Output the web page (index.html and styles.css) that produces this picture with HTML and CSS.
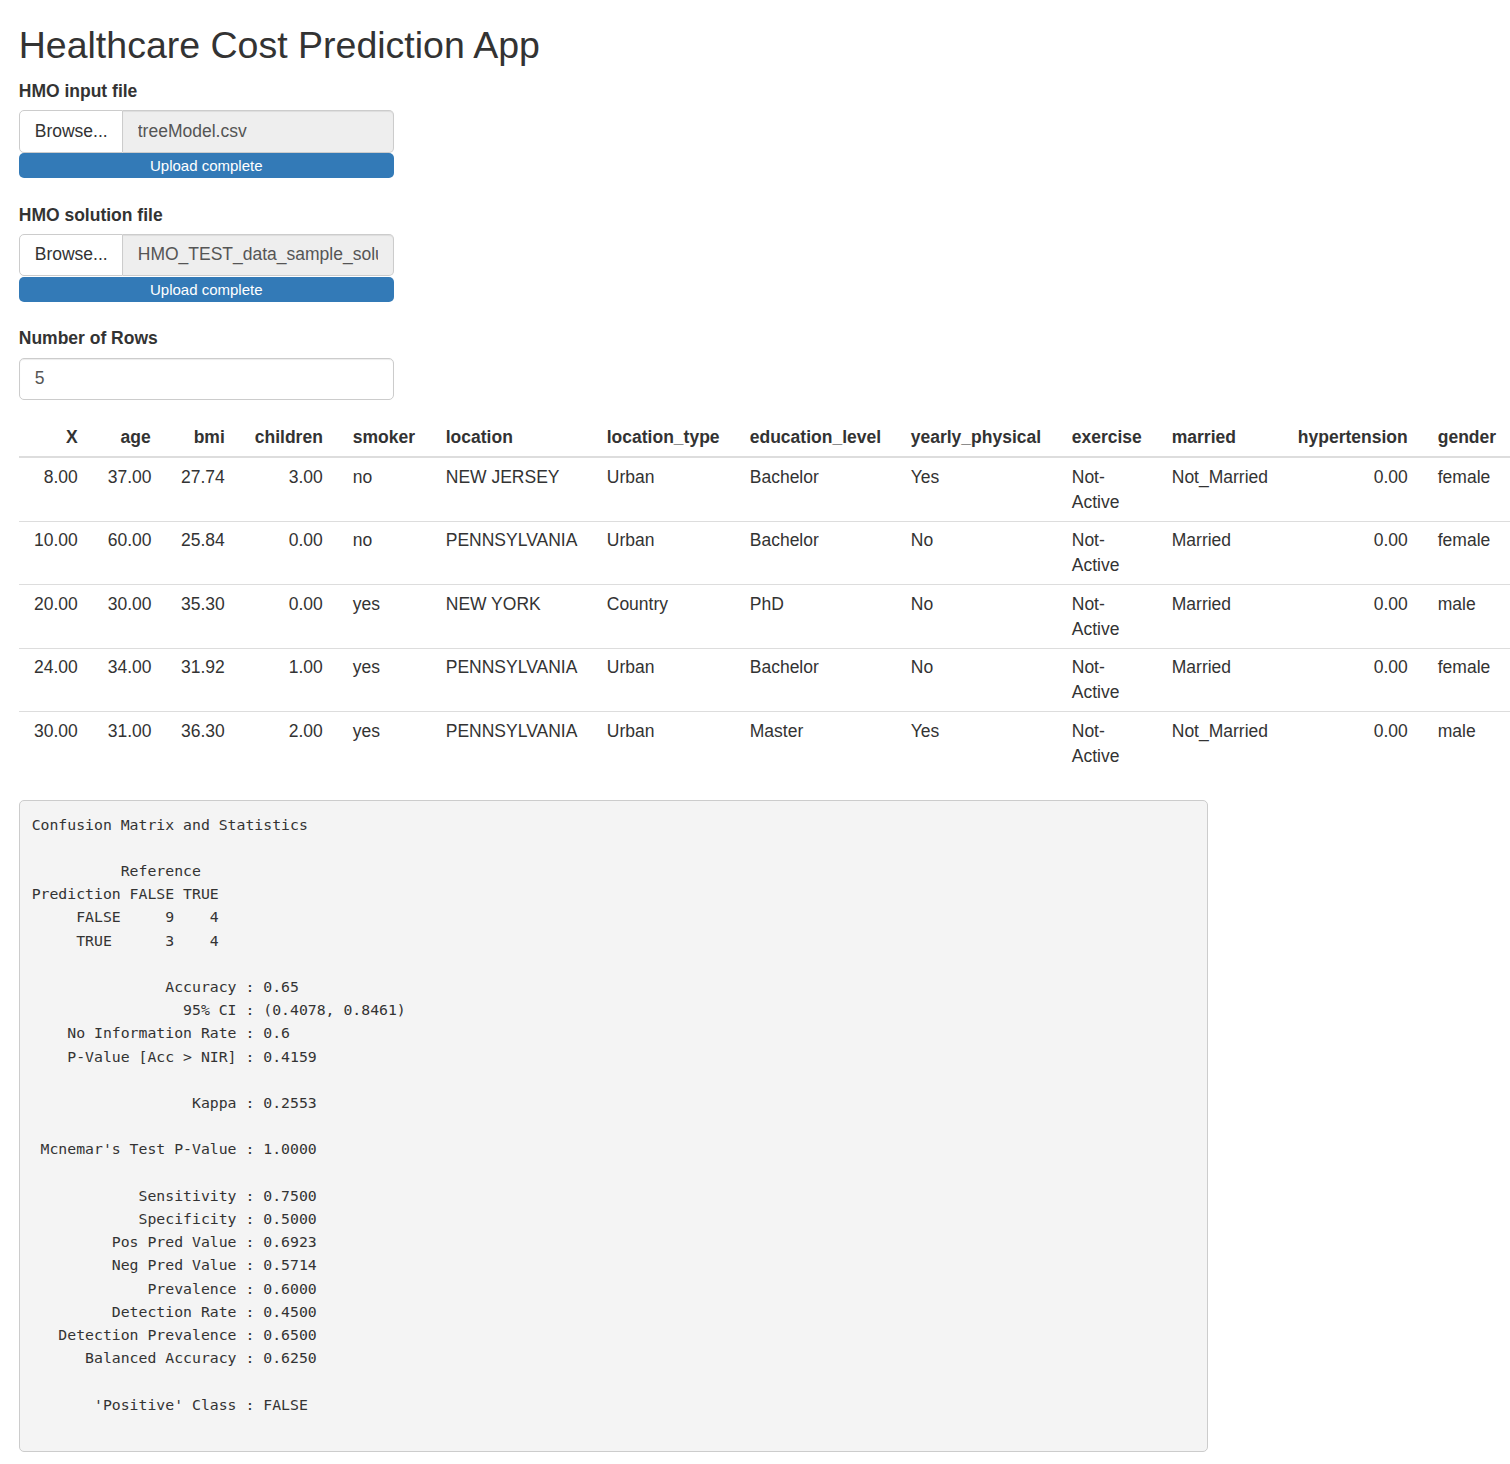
FILE: index.html
```html
<!DOCTYPE html>
<html>
<head>
<meta charset="utf-8">
<title>Healthcare Cost Prediction App</title>
<link rel="stylesheet" href="styles.css">
</head>
<body>
<div class="container">
  <h2 class="title">Healthcare Cost Prediction App</h2>

  <div class="form-group file-group">
    <label class="control-label">HMO input file</label>
    <div class="input-group">
      <span class="btn-browse">Browse...</span>
      <span class="file-name"><span class="file-text">treeModel.csv</span></span>
    </div>
    <div class="progress"><div class="progress-bar">Upload complete</div></div>
  </div>

  <div class="form-group file-group">
    <label class="control-label">HMO solution file</label>
    <div class="input-group">
      <span class="btn-browse">Browse...</span>
      <span class="file-name"><span class="file-text">HMO_TEST_data_sample_solution.csv</span></span>
    </div>
    <div class="progress"><div class="progress-bar">Upload complete</div></div>
  </div>

  <div class="form-group">
    <label class="control-label">Number of Rows</label>
    <div class="num-input">5</div>
  </div>

  <table class="data-table">
    <colgroup>
      <col class="c-x"><col class="c-age"><col class="c-bmi"><col class="c-children"><col class="c-smoker"><col class="c-location"><col class="c-loctype"><col class="c-edu"><col class="c-phys"><col class="c-ex"><col class="c-married"><col class="c-hyp"><col class="c-gender">
    </colgroup>
    <thead>
      <tr>
        <th class="num">X</th><th class="num">age</th><th class="num">bmi</th><th class="num">children</th><th>smoker</th><th>location</th><th>location_type</th><th>education_level</th><th>yearly_physical</th><th>exercise</th><th>married</th><th class="num">hypertension</th><th>gender</th>
      </tr>
    </thead>
    <tbody>
      <tr><td class="num">8.00</td><td class="num">37.00</td><td class="num">27.74</td><td class="num">3.00</td><td>no</td><td>NEW JERSEY</td><td>Urban</td><td>Bachelor</td><td>Yes</td><td>Not-Active</td><td>Not_Married</td><td class="num">0.00</td><td>female</td></tr>
      <tr><td class="num">10.00</td><td class="num">60.00</td><td class="num">25.84</td><td class="num">0.00</td><td>no</td><td>PENNSYLVANIA</td><td>Urban</td><td>Bachelor</td><td>No</td><td>Not-Active</td><td>Married</td><td class="num">0.00</td><td>female</td></tr>
      <tr><td class="num">20.00</td><td class="num">30.00</td><td class="num">35.30</td><td class="num">0.00</td><td>yes</td><td>NEW YORK</td><td>Country</td><td>PhD</td><td>No</td><td>Not-Active</td><td>Married</td><td class="num">0.00</td><td>male</td></tr>
      <tr><td class="num">24.00</td><td class="num">34.00</td><td class="num">31.92</td><td class="num">1.00</td><td>yes</td><td>PENNSYLVANIA</td><td>Urban</td><td>Bachelor</td><td>No</td><td>Not-Active</td><td>Married</td><td class="num">0.00</td><td>female</td></tr>
      <tr><td class="num">30.00</td><td class="num">31.00</td><td class="num">36.30</td><td class="num">2.00</td><td>yes</td><td>PENNSYLVANIA</td><td>Urban</td><td>Master</td><td>Yes</td><td>Not-Active</td><td>Not_Married</td><td class="num">0.00</td><td>male</td></tr>
    </tbody>
  </table>

<pre class="output">Confusion Matrix and Statistics

          Reference
Prediction FALSE TRUE
     FALSE     9    4
     TRUE      3    4

               Accuracy : 0.65
                 95% CI : (0.4078, 0.8461)
    No Information Rate : 0.6
    P-Value [Acc &gt; NIR] : 0.4159

                  Kappa : 0.2553

 Mcnemar's Test P-Value : 1.0000

            Sensitivity : 0.7500
            Specificity : 0.5000
         Pos Pred Value : 0.6923
         Neg Pred Value : 0.5714
             Prevalence : 0.6000
         Detection Rate : 0.4500
   Detection Prevalence : 0.6500
      Balanced Accuracy : 0.6250

       'Positive' Class : FALSE
 </pre>
</div>
</body>
</html>
```

FILE: styles.css
```css
html, body {
  margin: 0;
  padding: 0;
  background: #fff;
}

body {
  font-family: "Liberation Sans", Arial, Helvetica, sans-serif;
  font-size: 17.5px;
  line-height: 25px;
  color: #333;
  overflow: hidden;
}

.container {
  padding: 0 18.75px;
}

.title {
  font-size: 37.5px;
  font-weight: normal;
  line-height: 41.25px;
  margin: 25px 0 12.5px;
  color: #333;
}

.form-group {
  width: 375px;
  margin-bottom: 18.75px;
}

.file-group {
  margin-bottom: 24.5px;
}

.control-label {
  display: block;
  font-weight: bold;
  margin-bottom: 6.25px;
  line-height: 25px;
}

.input-group {
  display: flex;
  height: 42.5px;
}

.btn-browse {
  box-sizing: border-box;
  height: 42.5px;
  padding: 7.5px 15px;
  border: 1px solid #ccc;
  border-radius: 5px 0 0 5px;
  background: #fff;
  color: #333;
  white-space: nowrap;
  width: 104px;
  flex: none;
}

.file-name {
  box-sizing: border-box;
  display: flex;
  flex: 1;
  min-width: 0;
  height: 42.5px;
  padding: 7.5px 15px;
  border: 1px solid #ccc;
  border-left: 0;
  border-radius: 0 5px 5px 0;
  background: #eee;
  color: #555;
  box-shadow: inset 0 1px 1px rgba(0,0,0,.075);
}

.file-text {
  display: block;
  flex: 1;
  min-width: 0;
  white-space: nowrap;
  overflow: hidden;
}

.progress {
  margin-top: 0.5px;
  height: 25px;
  border-radius: 5px;
  background: #f5f5f5;
  overflow: hidden;
}

.progress-bar {
  height: 25px;
  width: 100%;
  background: #337ab7;
  color: #fff;
  font-size: 15px;
  line-height: 25px;
  text-align: center;
}

.num-input {
  box-sizing: border-box;
  height: 42.5px;
  padding: 7.5px 15px;
  border: 1px solid #ccc;
  border-radius: 5px;
  color: #555;
  background: #fff;
  box-shadow: inset 0 1px 1px rgba(0,0,0,.075);
}

.data-table {
  border-collapse: collapse;
  table-layout: fixed;
  width: 1492px;
  margin-bottom: 25px;
}

.data-table th,
.data-table td {
  padding: 6.25px 15px;
  line-height: 25px;
  text-align: left;
  vertical-align: top;
  overflow: visible;
}

.data-table th {
  font-weight: bold;
  vertical-align: bottom;
  border-bottom: 2px solid #ddd;
  white-space: nowrap;
}

.data-table td {
  border-top: 1px solid #ddd;
}

.data-table .num {
  text-align: right;
}

.c-x { width: 74px; }
.c-age { width: 73px; }
.c-bmi { width: 74px; }
.c-children { width: 98px; }
.c-smoker { width: 93px; }
.c-location { width: 161px; }
.c-loctype { width: 143px; }
.c-edu { width: 161px; }
.c-phys { width: 161px; }
.c-ex { width: 100px; }
.c-married { width: 126px; }
.c-hyp { width: 140px; }
.c-gender { width: 88px; }

.output {
  box-sizing: border-box;
  width: 1189px;
  margin: 0 0 12.5px;
  padding: 11.875px;
  font-family: "DejaVu Sans Mono", "Liberation Mono", monospace;
  font-size: 14.8px;
  line-height: 23.2px;
  color: #333;
  background: #f4f4f4;
  border: 1px solid #ccc;
  border-radius: 5px;
  white-space: pre;
  overflow: hidden;
}
```
